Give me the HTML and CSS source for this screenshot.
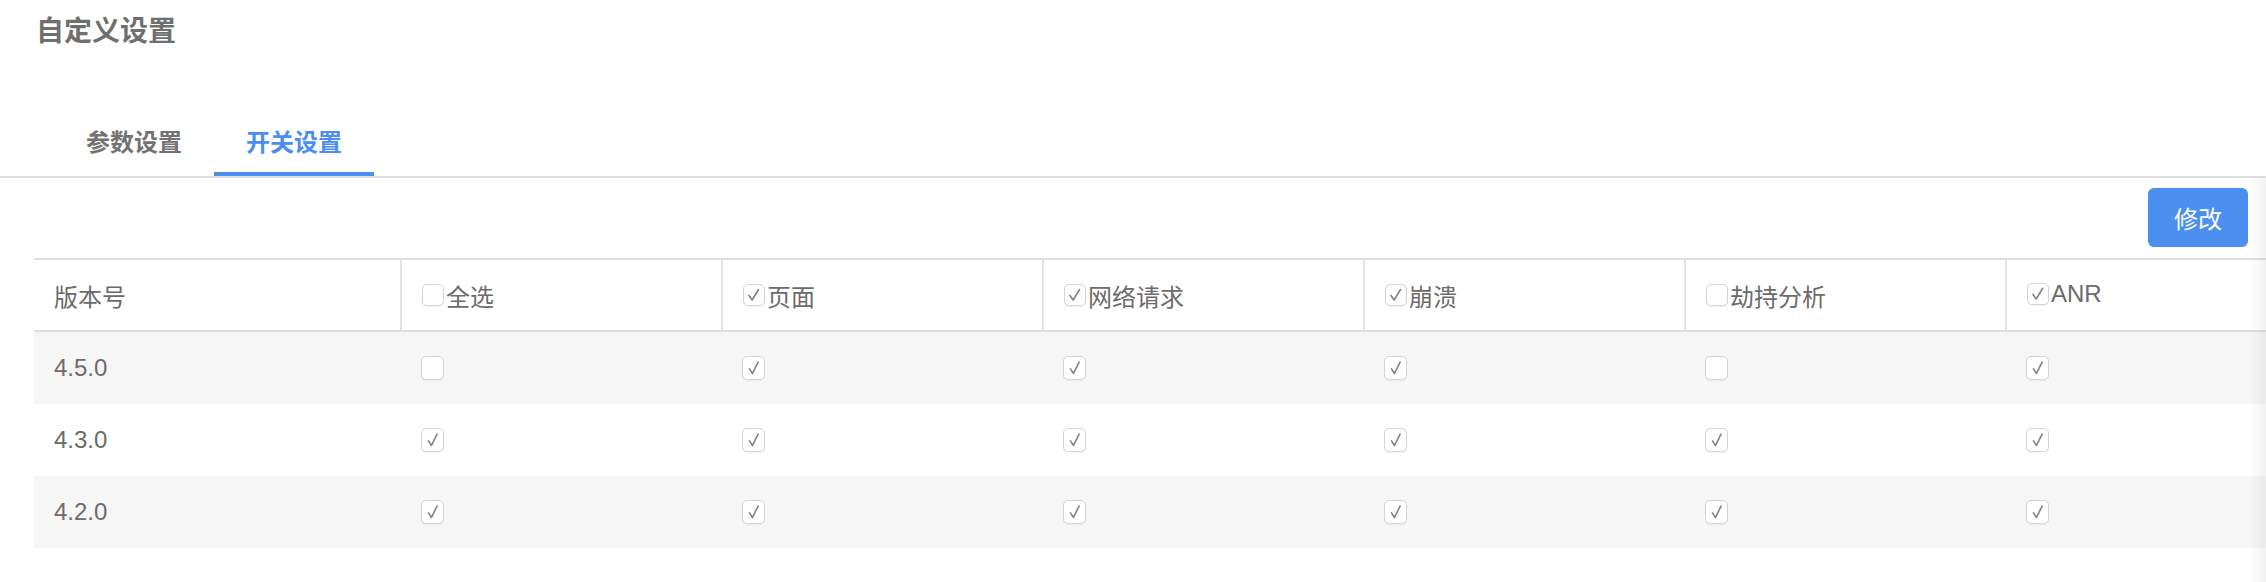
FILE: index.html
```html
<!DOCTYPE html>
<html lang="zh-CN">
<head>
<meta charset="utf-8">
<title>自定义设置</title>
<link rel="stylesheet" href="styles.css">
</head>
<body>
<div class="page">
  <h1 class="title">自定义设置</h1>
  <div class="tabs">
    <div class="tab">参数设置</div>
    <div class="tab active">开关设置</div>
  </div>
  <div class="toolbar">
    <button class="btn-primary">修改</button>
  </div>
  <div class="table-wrap">
    <table class="grid">
      <colgroup>
        <col class="col-first">
        <col class="col"><col class="col"><col class="col"><col class="col"><col class="col"><col class="col">
      </colgroup>
      <thead>
        <tr>
          <th>版本号</th>
          <th><span class="lbl"><span class="cb"></span>全选</span></th>
          <th><span class="lbl"><span class="cb on"><svg viewBox="0 0 22 22"><polyline points="5.5,11.5 9,16.5 16,5"/></svg></span>页面</span></th>
          <th><span class="lbl"><span class="cb on"><svg viewBox="0 0 22 22"><polyline points="5.5,11.5 9,16.5 16,5"/></svg></span>网络请求</span></th>
          <th><span class="lbl"><span class="cb on"><svg viewBox="0 0 22 22"><polyline points="5.5,11.5 9,16.5 16,5"/></svg></span>崩溃</span></th>
          <th><span class="lbl"><span class="cb"></span>劫持分析</span></th>
          <th><span class="lbl"><span class="cb on"><svg viewBox="0 0 22 22"><polyline points="5.5,11.5 9,16.5 16,5"/></svg></span>ANR</span></th>
        </tr>
      </thead>
      <tbody>
        <tr class="striped">
          <td>4.5.0</td>
          <td><span class="cb big"></span></td>
          <td><span class="cb big on"><svg viewBox="0 0 22 22"><polyline points="6,12 9.3,17 15.5,4.5"/></svg></span></td>
          <td><span class="cb big on"><svg viewBox="0 0 22 22"><polyline points="6,12 9.3,17 15.5,4.5"/></svg></span></td>
          <td><span class="cb big on"><svg viewBox="0 0 22 22"><polyline points="6,12 9.3,17 15.5,4.5"/></svg></span></td>
          <td><span class="cb big"></span></td>
          <td><span class="cb big on"><svg viewBox="0 0 22 22"><polyline points="6,12 9.3,17 15.5,4.5"/></svg></span></td>
        </tr>
        <tr>
          <td>4.3.0</td>
          <td><span class="cb big on"><svg viewBox="0 0 22 22"><polyline points="6,12 9.3,17 15.5,4.5"/></svg></span></td>
          <td><span class="cb big on"><svg viewBox="0 0 22 22"><polyline points="6,12 9.3,17 15.5,4.5"/></svg></span></td>
          <td><span class="cb big on"><svg viewBox="0 0 22 22"><polyline points="6,12 9.3,17 15.5,4.5"/></svg></span></td>
          <td><span class="cb big on"><svg viewBox="0 0 22 22"><polyline points="6,12 9.3,17 15.5,4.5"/></svg></span></td>
          <td><span class="cb big on"><svg viewBox="0 0 22 22"><polyline points="6,12 9.3,17 15.5,4.5"/></svg></span></td>
          <td><span class="cb big on"><svg viewBox="0 0 22 22"><polyline points="6,12 9.3,17 15.5,4.5"/></svg></span></td>
        </tr>
        <tr class="striped">
          <td>4.2.0</td>
          <td><span class="cb big on"><svg viewBox="0 0 22 22"><polyline points="6,12 9.3,17 15.5,4.5"/></svg></span></td>
          <td><span class="cb big on"><svg viewBox="0 0 22 22"><polyline points="6,12 9.3,17 15.5,4.5"/></svg></span></td>
          <td><span class="cb big on"><svg viewBox="0 0 22 22"><polyline points="6,12 9.3,17 15.5,4.5"/></svg></span></td>
          <td><span class="cb big on"><svg viewBox="0 0 22 22"><polyline points="6,12 9.3,17 15.5,4.5"/></svg></span></td>
          <td><span class="cb big on"><svg viewBox="0 0 22 22"><polyline points="6,12 9.3,17 15.5,4.5"/></svg></span></td>
          <td><span class="cb big on"><svg viewBox="0 0 22 22"><polyline points="6,12 9.3,17 15.5,4.5"/></svg></span></td>
        </tr>
      </tbody>
    </table>
  </div>
  <div class="edge-shadow"></div>
</div>
</body>
</html>
```

FILE: styles.css
```css
html, body {
  margin: 0;
  padding: 0;
  background: #ffffff;
}
body {
  font-family: "Liberation Sans", "Noto Sans CJK SC", sans-serif;
  color: #6b6b6b;
  overflow: hidden;
}
.page {
  position: relative;
  width: 2266px;
  height: 582px;
  overflow: hidden;
}
.title {
  margin: 0;
  padding: 15px 0 0 36px;
  font-size: 28px;
  line-height: 34px;
  font-weight: bold;
  color: #6f6f6f;
}
.tabs {
  display: flex;
  margin-top: 55px;
  padding-left: 54px;
  border-bottom: 2px solid #dedede;
}
.tab {
  box-sizing: border-box;
  width: 160px;
  height: 72px;
  display: flex;
  align-items: center;
  justify-content: center;
  font-size: 24px;
  font-weight: bold;
  color: #727272;
  border-bottom: 4px solid transparent;
  padding-top: 4px;
}
.tab.active {
  color: #4a8ef0;
  border-bottom-color: #4a8ef0;
}
.toolbar {
  display: flex;
  justify-content: flex-end;
  padding: 10px 18px 11px 0;
}
.btn-primary {
  width: 100px;
  height: 59px;
  border: 0;
  border-radius: 6px;
  background: #4b8ff1;
  color: #ffffff;
  font-family: "Liberation Sans", "Noto Sans CJK SC", sans-serif;
  font-size: 24px;
  padding: 0;
}
.table-wrap {
  margin-left: 34px;
  overflow: hidden;
}
.grid {
  table-layout: fixed;
  width: 2293px;
  border-collapse: collapse;
  border-spacing: 0;
}
.col-first { width: 367px; }
.col { width: 321px; }
.grid thead th {
  box-sizing: border-box;
  height: 72px;
  padding: 0 0 0 20px;
  text-align: left;
  font-weight: normal;
  font-size: 24px;
  color: #6b6b6b;
  border-top: 2px solid #e0e0e0;
  border-bottom: 2px solid #e0e0e0;
  border-right: 2px solid #e3e3e3;
  vertical-align: middle;
}
.grid tbody td {
  height: 72px;
  padding: 0 0 0 20px;
  font-size: 24px;
  color: #6b6b6b;
  vertical-align: middle;
}
.grid tbody tr.striped td {
  background: #f7f6f7;
}
.lbl {
  display: inline-flex;
  align-items: center;
  gap: 2px;
}
.cb {
  box-sizing: border-box;
  display: inline-flex;
  align-items: center;
  justify-content: center;
  width: 22px;
  height: 22px;
  border: 1px solid #d4d4d4;
  border-radius: 5px;
  background: #ffffff;
  box-shadow: 0 1px 1px rgba(0, 0, 0, 0.05);
  vertical-align: middle;
}
.cb.big {
  width: 23px;
  height: 24px;
  display: flex;
}
.cb svg {
  width: 20px;
  height: 22px;
  flex: none;
}
.cb svg polyline {
  fill: none;
  stroke: #858585;
  stroke-width: 1.8;
  stroke-linecap: round;
  stroke-linejoin: round;
}
.edge-shadow {
  position: absolute;
  top: 178px;
  right: 0;
  width: 18px;
  bottom: 0;
  background: linear-gradient(to right, rgba(0, 0, 0, 0), rgba(0, 0, 0, 0.05));
  pointer-events: none;
}
```
